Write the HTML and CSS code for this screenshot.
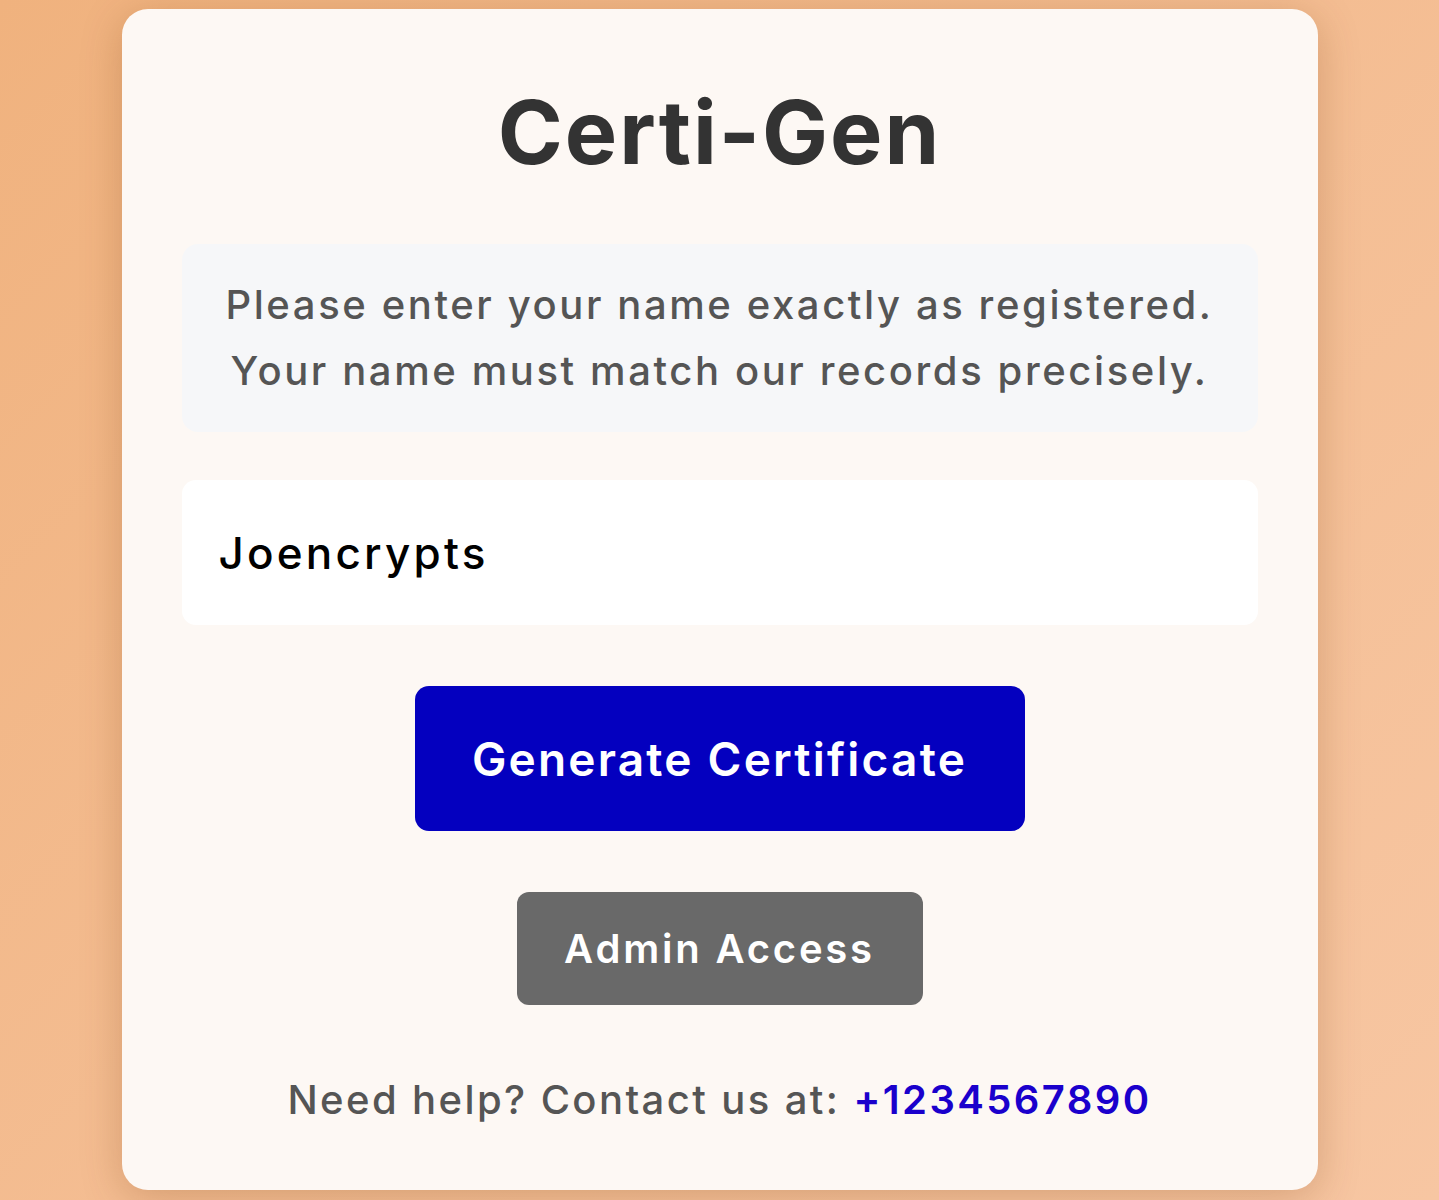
FILE: index.html
```html
<!DOCTYPE html>
<html lang="en">

<head>
    <meta charset="UTF-8">
    <meta name="viewport" content="width=device-width, initial-scale=1.0">
    <title>Certi-Gen</title>
    <link rel="stylesheet" href="styles.css">
</head>

<body>
    <div class="container">
        <h1>Certi-Gen</h1>

        <div class="notice">
            <p>Please enter your name exactly as registered.</p>
            <p>Your name must match our records precisely.</p>
        </div>

        <form id="certForm">
            <input type="text" id="name" value="Joencrypts" placeholder="Enter your full name">
            <button type="submit" class="btn-generate">Generate Certificate</button>
        </form>

        <button type="button" class="btn-admin">Admin Access</button>

        <p class="help">Need help? Contact us at: <a href="tel:+1234567890">+1234567890</a></p>
    </div>
</body>

</html>
```

FILE: styles.css
```css
* {
    margin: 0;
    padding: 0;
    box-sizing: border-box;
    font-family: Inter, 'Noto Sans', sans-serif;
}

body {
    background: linear-gradient(135deg, #f0b27e 0%, #f4bd92 50%, #f7c6a2 100%);
    min-height: 1200px;
    padding-top: 9px;
    overflow: hidden;
}

.container {
    width: 1196px;
    height: 1181px;
    margin: 0 auto;
    padding: 68px 60px 0;
    background: #fdf8f4;
    border-radius: 26px;
    box-shadow: 0 8px 40px rgba(120, 60, 10, 0.25);
    text-align: center;
}

h1 {
    color: #333;
    font-size: 88px;
    font-weight: 700;
    line-height: 110px;
    letter-spacing: 2px;
    margin-bottom: 57px;
}

.notice {
    background: #f6f7f9;
    border-radius: 16px;
    padding: 28px 20px;
    color: #555;
    font-size: 40px;
    font-weight: 500;
    line-height: 66px;
    letter-spacing: 2.6px;
}

#certForm {
    display: flex;
    flex-direction: column;
    align-items: center;
}

input {
    width: 100%;
    height: 145px;
    margin-top: 48px;
    padding: 0 37px;
    border: none;
    border-radius: 14px;
    background: #fff;
    font-size: 44px;
    font-weight: 500;
    letter-spacing: 3.2px;
    color: #000;
}

input:focus {
    outline: none;
}

button {
    border: none;
    color: #fff;
    cursor: pointer;
    font-weight: 600;
}

.btn-generate {
    width: 610px;
    height: 145px;
    margin-top: 61px;
    background: #0400bf;
    border-radius: 14px;
    font-size: 46px;
    letter-spacing: 2.2px;
}

.btn-admin {
    width: 406px;
    height: 113px;
    margin-top: 61px;
    background: #696969;
    border-radius: 12px;
    font-size: 40px;
    letter-spacing: 2.8px;
}

.help {
    margin-top: 70px;
    color: #555;
    font-size: 40px;
    font-weight: 500;
    letter-spacing: 2.4px;
}

.help a {
    color: #1a00cc;
    text-decoration: none;
    font-weight: 600;
}
```
